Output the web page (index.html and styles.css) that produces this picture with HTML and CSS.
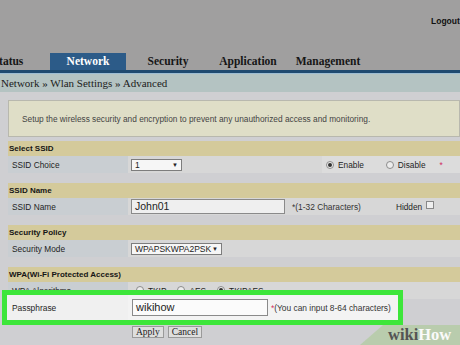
FILE: index.html
```html
<!DOCTYPE html>
<html>
  <head>
    <meta charset="UTF-8" />
    <title>Wlan Settings - Advanced</title>
    <link rel="stylesheet" href="styles.css">
  </head>
  <body>
    <div class="topbar">
      <span class="logout">Logout</span>
    </div>

    <div class="tabs">
      <div class="tab">Status</div>
      <div class="tab active">Network</div>
      <div class="tab">Security</div>
      <div class="tab">Application</div>
      <div class="tab">Management</div>
    </div>
    <div class="tabline"></div>

    <div class="crumb">Network &raquo; Wlan Settings &raquo; Advanced</div>

    <div class="content">
      <div class="desc">
        Setup the wireless security and encryption to prevent any unauthorized access and monitoring.
      </div>

      <div class="section">
        <div class="section-title">Select SSID</div>
        <div class="row">
          <div class="label">SSID Choice</div>
          <div class="value">
            <div class="select small"><span>1</span><span class="arrow">&#9660;</span></div>
          </div>
          <div class="extra">
            <span class="radio on"></span><span class="opt">Enable</span>
            <span class="radio"></span><span class="opt end">Disable</span>
            <span class="req">*</span>
          </div>
        </div>
      </div>

      <div class="section">
        <div class="section-title">SSID Name</div>
        <div class="row">
          <div class="label">SSID Name</div>
          <div class="value">
            <div class="input ssid">John01</div>
            <span class="hint">*(1-32 Characters)</span>
            <span class="hidden-label">Hidden</span>
            <span class="checkbox"></span>
          </div>
        </div>
      </div>

      <div class="section">
        <div class="section-title">Security Policy</div>
        <div class="row">
          <div class="label">Security Mode</div>
          <div class="value">
            <div class="select wide"><span>WPAPSKWPA2PSK</span><span class="arrow">&#9660;</span></div>
          </div>
        </div>
      </div>

      <div class="section last">
        <div class="section-title">WPA(Wi-Fi Protected Access)</div>
        <div class="row">
          <div class="label">WPA Algorithms</div>
          <div class="value algo">
            <span class="radio"></span><span class="opt">TKIP</span>
            <span class="radio"></span><span class="opt">AES</span>
            <span class="radio on"></span><span class="opt">TKIPAES</span>
          </div>
        </div>
        <div class="highlight">
          <div class="row pass">
            <div class="label">Passphrase</div>
            <div class="value">
              <div class="input passphrase">wikihow</div>
              <span class="hint"><span class="red">*</span>(You can input 8-64 characters)</span>
            </div>
          </div>
        </div>
      </div>

      <div class="actions">
        <button class="btn">Apply</button>
        <button class="btn">Cancel</button>
      </div>
    </div>

    <div class="watermark"><span class="wiki">wiki</span><span class="how">How</span></div>
  </body>
</html>
```

FILE: styles.css
```css
* {
  margin: 0;
  padding: 0;
  box-sizing: border-box;
}

body {
  width: 460px;
  height: 345px;
  overflow: hidden;
  position: relative;
  background: #cfcfd2;
  font-family: "Liberation Sans", Arial, sans-serif;
  color: #222;
}

.topbar {
  height: 53px;
  background: #a09f9f;
  display: flex;
  justify-content: flex-end;
  padding-top: 16px;
}

.logout {
  font-size: 8.5px;
  font-weight: bold;
  color: #111;
  line-height: 10px;
  width: 29px;
  white-space: nowrap;
}

.tabs {
  display: flex;
  height: 17px;
  margin-left: -32px;
  background: #a09f9f;
}

.tab {
  flex: none;
  width: 76px;
  margin: 0 2px;
  text-align: center;
  font-family: "Liberation Serif", "Times New Roman", serif;
  font-weight: bold;
  font-size: 11.5px;
  line-height: 17px;
  color: #161616;
  white-space: nowrap;
}

.tab.active {
  background: #2c5b88;
  color: #fff;
}

.tabline {
  height: 4px;
  background: #1f4a70;
  border-bottom: 1px solid #9dbdd3;
}

.crumb {
  height: 18px;
  background: #b4c3c2;
  font-family: "Liberation Serif", "Times New Roman", serif;
  font-size: 11px;
  line-height: 18px;
  padding-left: 1px;
  color: #1c1c1c;
}

.content {
  padding: 8px 0 0 8px;
}

.desc {
  height: 37px;
  background: #dfdec7;
  border: 1px solid #b8b8ae;
  display: flex;
  align-items: center;
  padding-left: 13px;
  font-size: 8.3px;
  color: #444;
  margin-bottom: 4px;
  white-space: nowrap;
}

.section {
  margin-bottom: 10px;
}

.section.last {
  margin-bottom: 0;
}

.section-title {
  height: 15px;
  background: #d4ca9b;
  font-size: 8px;
  font-weight: bold;
  line-height: 15px;
  padding-left: 1px;
  color: #151515;
}

.row {
  display: flex;
  height: 17px;
  font-size: 8.3px;
  color: #1e1e1e;
}

.label {
  flex: none;
  width: 120px;
  background: #c9ced2;
  padding-left: 4px;
  display: flex;
  align-items: center;
  white-space: nowrap;
}

.value {
  flex: 1;
  background: #d7d7d7;
  display: flex;
  align-items: center;
  padding-left: 3px;
  white-space: nowrap;
}

.extra {
  flex: none;
  width: 138px;
  background: #dcdcdc;
  display: flex;
  align-items: center;
  padding-left: 4px;
  white-space: nowrap;
}

.select {
  height: 12px;
  background: #f6f6f6;
  border: 1px solid #7d7d7d;
  display: flex;
  align-items: center;
  justify-content: space-between;
  padding: 0 3px;
  font-size: 8.5px;
  color: #222;
}

.select.small {
  width: 51px;
}

.select.wide {
  width: 91px;
}

.arrow {
  font-size: 6px;
}

.input {
  background: #efefef;
  border: 1px solid #8a8a8a;
  padding-left: 3px;
  color: #222;
}

.input.ssid {
  width: 154px;
  height: 15px;
  font-size: 10.5px;
  line-height: 13px;
}

.input.passphrase {
  width: 136px;
  height: 17px;
  background: #fbfbfb;
  font-size: 11px;
  line-height: 15px;
}

.hint {
  margin-left: 7px;
  font-size: 8.4px;
  color: #333;
}

.red,
.req {
  color: #d03060;
}

.req {
  margin-left: 14px;
}

.hidden-label {
  margin-left: 35px;
}

.checkbox {
  width: 8px;
  height: 8px;
  margin-left: 4px;
  border: 1px solid #888;
  background: #efefef;
  margin-top: -3px;
}

.radio {
  flex: none;
  width: 8px;
  height: 8px;
  border-radius: 50%;
  border: 1px solid #8c8c8c;
  background: #ececec;
  display: flex;
  align-items: center;
  justify-content: center;
  margin-right: 4px;
}

.radio.on::after {
  content: "";
  width: 4px;
  height: 4px;
  border-radius: 50%;
  background: #333;
}

.opt {
  margin-right: 22px;
}

.opt.end {
  margin-right: 0;
}

.algo {
  padding-left: 8px;
  align-items: flex-start;
  padding-top: 4px;
}

.algo .opt {
  margin-right: 11px;
}

.highlight {
  position: relative;
  margin: -9px 0 0 -6px;
  width: 401px;
  border: 5px solid #3de63a;
  background: #f2f2f2;
}

.row.pass {
  height: 25px;
  font-size: 8.4px;
}

.row.pass .label {
  width: 121px;
  background: #f0f0f0;
  padding-left: 5px;
}

.row.pass .value {
  background: #f3f3f3;
  padding-left: 4px;
}

.row.pass .hint {
  margin-left: 3px;
}

.actions {
  display: flex;
  gap: 4px;
  padding-left: 124px;
  margin-top: 1px;
}

.btn {
  height: 12px;
  padding: 0 3px;
  font-family: "Liberation Serif", "Times New Roman", serif;
  font-size: 9.5px;
  line-height: 10px;
  background: #dedede;
  border: 1px solid #9a9a9a;
  color: #222;
}

.watermark {
  position: absolute;
  right: 0;
  bottom: 0;
  width: 100px;
  height: 20px;
  padding: 1px 0 0 28px;
  background: rgba(178, 203, 160, 0.75);
  clip-path: polygon(23px 0, 100% 0, 100% 100%, 0 100%);
  font-family: "Liberation Serif", "Times New Roman", serif;
  font-weight: bold;
  font-size: 16.5px;
  line-height: 18px;
  white-space: nowrap;
}

.wiki {
  color: #545454;
}

.how {
  color: #fafafa;
}
```
